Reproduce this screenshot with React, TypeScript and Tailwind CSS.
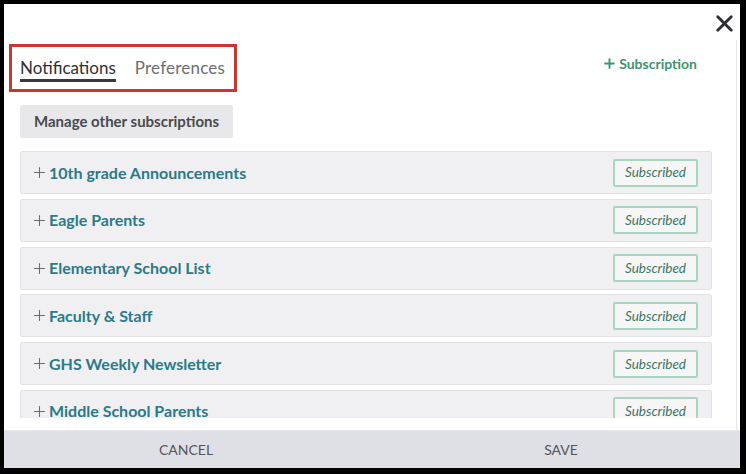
import { X, Plus } from "lucide-react";

const LISTS = [
  "10th grade Announcements",
  "Eagle Parents",
  "Elementary School List",
  "Faculty & Staff",
  "GHS Weekly Newsletter",
  "Middle School Parents",
];

function Row({ name }: { name: string }) {
  return (
    <div className="flex items-center justify-between shrink-0 h-[43px] bg-[#f0f0f2] border border-[#e3e3e6] rounded-[2px] pl-[10px] pr-[13px]">
      <div className="flex items-center gap-[1px]">
        <Plus size={17} strokeWidth={1.5} className="text-[#6b6b6b]" />
        <span className="text-[16px] font-bold text-[#2b7a88]">{name}</span>
      </div>
      <span className="h-[28px] px-[10px] flex items-center border-2 border-[#a8d6c0] rounded-[2px] bg-[#f6f6f7] text-[13.5px] italic text-[#3d7565]">
        Subscribed
      </span>
    </div>
  );
}

export default function App() {
  return (
    <div className="w-[746px] h-[474px] bg-black pt-1 pl-1 pr-[6px] pb-[6px]" style={{ fontFamily: "Lato, 'Open Sans', sans-serif" }}>
      <div className="relative w-[736px] h-[464px] bg-white flex flex-col">
        <button className="absolute top-[6px] right-[2px] text-[#2d2d33]">
          <X size={27} strokeWidth={2.5} />
        </button>

        <div className="flex flex-1 min-h-0">
          <div className="flex-1 flex flex-col pl-4 pr-6 pt-[40px] min-h-0">
            <div className="flex items-start justify-between">
              <div className="-ml-[11px] w-[228px] h-[48px] border-[3px] border-[#c9382e] flex items-center gap-[19px] pl-2">
                <span className="text-[17px] text-[#2f2f33] border-b-[3px] border-[#3a3a3e] leading-[20px] pb-[1px] mt-[4px]">
                  Notifications
                </span>
                <span className="text-[17px] text-[#6e6e72] leading-[20px] tracking-[0.2px]">Preferences</span>
              </div>
              <button className="mt-[9px] mr-[15px] flex items-center gap-[2px] text-[14px] font-bold text-[#3d9470]">
                <Plus size={15} strokeWidth={3} />
                Subscription
              </button>
            </div>

            <div className="mt-[13px]">
              <button className="h-[33px] px-[14px] bg-[#e8e8ea] rounded-[2px] text-[15px] font-bold text-[#4a4a4e]">
                Manage other subscriptions
              </button>
            </div>

            <div className="mt-[13px] h-[267px] overflow-hidden flex flex-col gap-[4.8px]">
              {LISTS.map((l) => (
                <Row key={l} name={l} />
              ))}
            </div>
          </div>
          <div className="w-1 mt-9 border-l border-[#e6e6e8]" />
        </div>

        <div className="h-[38px] shrink-0 bg-[#dfdfe6] border-t border-[#e8e8ee] grid grid-cols-2 text-[14px] text-[#555559]">
          <button className="flex items-center justify-center pr-1">CANCEL</button>
          <button className="flex items-center justify-center pl-[10px]">SAVE</button>
        </div>
      </div>
    </div>
  );
}
